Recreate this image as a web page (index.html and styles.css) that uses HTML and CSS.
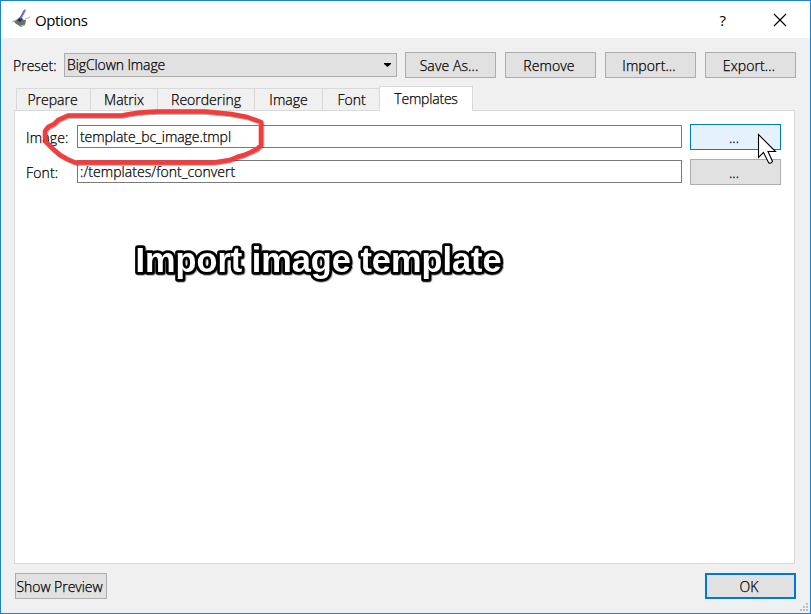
FILE: index.html
```html
<!DOCTYPE html>
<html lang="en">
<head>
<meta charset="utf-8">
<title>Options</title>
<link rel="stylesheet" href="styles.css">
</head>
<body>
<div class="window">
  <header class="titlebar">
    <svg class="app-icon" width="20" height="22" viewBox="0 0 20 22">
      <path d="M3 13l5-2 7 1-1 5-4 2-6-4z" fill="#66706b"/>
      <path d="M1 14l6-3M14 11l5-2M9 18l5-1" fill="none" stroke="#b4b8b4"/>
      <path d="M6 12l3-3 3 2-3 3z" fill="#273033"/>
      <path d="M9 11l5-9" stroke="#4653c8" stroke-width="2"/>
      <path d="M10 10l5-9" stroke="#91a2ed" stroke-width=".7"/>
    </svg>
    <h1>Options</h1>
    <span class="help">?</span>
    <svg class="close" width="14" height="14" viewBox="0 0 14 14"><path d="M1 1l12 12M13 1L1 13" stroke="#000" stroke-width="1.15"/></svg>
  </header>
  <div class="toolbar">
    <label>Preset:</label>
    <div class="select"><span>BigClown Image</span><svg width="7" height="4" viewBox="0 0 7 4"><path d="M0 0h7v1L3.5 4 0 1z"/></svg></div>
    <button>Save As...</button>
    <button>Remove</button>
    <button>Import...</button>
    <button>Export...</button>
  </div>
  <nav class="tabs">
    <div class="tab prepare">Prepare</div>
    <div class="tab matrix">Matrix</div>
    <div class="tab reordering">Reordering</div>
    <div class="tab image">Image</div>
    <div class="tab font">Font</div>
    <div class="tab active">Templates</div>
  </nav>
  <main class="panel">
    <div class="field"><label>Image:</label><div class="input"><span class="v-image">template_bc_image.tmpl</span></div><button class="hover">...</button></div>
    <div class="field"><label>Font:</label><div class="input"><span class="v-font">:/templates/font_convert</span></div><button>...</button></div>
  </main>
  <footer class="footer">
    <button class="preview">Show Preview</button>
    <button class="ok">OK</button>
  </footer>
  <svg class="grip" width="8" height="8" viewBox="0 0 8 8"><path d="M6 0h2v2H6zM3 3h2v2H3zM6 3h2v2H6zM0 6h2v2H0zM3 6h2v2H3zM6 6h2v2H6z" fill="#bfbfbf"/></svg>
  <svg class="annotation" width="811" height="614" viewBox="0 0 811 614">
    <defs><filter id="soft" x="-10%" y="-20%" width="120%" height="150%"><feDropShadow dx=".7" dy=".7" stdDeviation=".7" flood-color="#000" flood-opacity=".5"/></filter></defs>
    <path class="ring" filter="url(#soft)" d="M68 115.500H122C133 113 141 112 157 111.500H205L231 114L247 117L261 122V145L257 149L251 152L244 155L237 157L230 160L214 162.500H75L67 159L60 155L53 149L46 142L45 137V131L48 127L54 124L58 120Z"/>
    <text class="caption" filter="url(#soft)" x="135.500" y="272" textLength="366" lengthAdjust="spacingAndGlyphs">Import image template</text>
    <path class="cursor" d="M758.500 134.500V157.500L763.500 152.500L768.500 162.500Q770.500 164.500 772.500 161.500L768 151.500H775.500Z"/>
  </svg>
</div>
</body>
</html>
```
FILE: styles.css
```css
* { box-sizing: border-box; }
body { margin: 0; font: 300 14px/20px "Open Sans", "Noto Sans", sans-serif; color: #000; -webkit-text-stroke: .25px #000; }
.window { position: relative; width: 811px; height: 614px; border: 1px solid #1883d7; background: #f0f0f0; overflow: hidden; }
.titlebar { height: 37px; background: #fff; display: flex; align-items: center; padding: 0 23px 0 10px; -webkit-text-stroke: 0; }
.app-icon { margin-top: -2px; }
h1 { margin: 0 0 0 4px; font: 400 15px/20px "Open Sans", sans-serif; letter-spacing: -.4px; flex: 1; }
.help { font: 400 15px/20px "Open Sans", sans-serif; margin-right: 47px; }
.toolbar { display: flex; height: 26px; margin: 14px 14px 0 12px; }
.toolbar label { width: 51px; padding-top: 4px; }
.select { width: 333px; height: 24px; margin: 1px 8px 0 0; border: 1px solid #adadad; background: #e1e1e1; display: flex; align-items: center; justify-content: space-between; padding: 0 5px 0 2px; }
.select span { letter-spacing: -.1px; }
button { width: 91px; height: 26px; margin: 0; padding: 2px 3px 0 0; border: 1px solid #adadad; background: #e1e1e1; font: inherit; color: #000; line-height: 20px; text-align: center; white-space: nowrap; }
.toolbar button { letter-spacing: .1px; }
.toolbar button + button { margin-left: 9px; }
.tabs { display: flex; align-items: flex-end; height: 25px; margin: 8px 0 0 15px; }
.tab { height: 23px; border: 1px solid #d9d9d9; border-width: 1px 0 0 1px; text-align: center; padding-top: 1px; }
.prepare { width: 74px; padding-right: 2px; }
.matrix { width: 67px; }
.reordering { width: 97px; }
.image { width: 68px; }
.font { width: 58px; }
.tab.active { width: 94px; height: 25px; margin-left: -1px; border-right-width: 1px; background: #fff; position: relative; z-index: 1; padding-top: 2px; letter-spacing: -.2px; }
.panel { height: 454px; margin: -1px 15px 0 13px; border: 1px solid #d9d9d9; background: #fff; padding: 13px 13px 0 11px; }
.field { display: flex; height: 26px; margin-bottom: 9px; }
.field label { width: 51px; padding-top: 4px; letter-spacing: .15px; }
.input { width: 605px; height: 23px; margin: 1px 8px 0 0; border: 1px solid #7a7a7a; padding-left: 2px; line-height: 21px; }
.v-image { letter-spacing: -.06px; }
.v-font { letter-spacing: .06px; }
.hover { background: #e5f1fb; border-color: #0078d7; }
.footer { display: flex; justify-content: space-between; margin: 9px 14px 0; }
.preview { width: 92px; letter-spacing: -.05px; }
.ok { border: 2px solid #0078d7; padding-top: 2px; }
.grip { position: absolute; right: 2px; bottom: 2px; }
.annotation { position: absolute; left: -1px; top: -1px; pointer-events: none; -webkit-text-stroke: initial; }
.ring { fill: none; stroke: #f13c3c; stroke-width: 4.5; stroke-linejoin: round; }
.caption { font: bold 35px "Liberation Sans", sans-serif; fill: #fff; stroke: #000; stroke-width: 5.5px; stroke-linejoin: round; paint-order: stroke; }
.cursor { fill: #fff; stroke: #000; stroke-width: 1.1; }
```
